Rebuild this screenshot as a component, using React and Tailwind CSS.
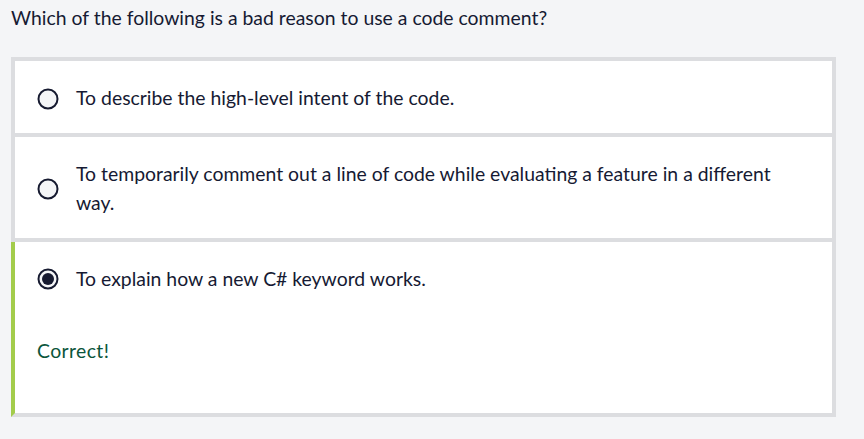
import React from "react";

function Radio({ checked }) {
  return (
    <svg width="22" height="22" viewBox="0 0 22 22" className="shrink-0">
      <circle cx="11" cy="11" r="9.5" fill="#f4f5f7" stroke="#161a30" strokeWidth="2" />
      {checked && <circle cx="11" cy="11" r="6" fill="#161a30" />}
    </svg>
  );
}

function Option({ text, checked, first, correct, children }) {
  return (
    <div
      className={
        "bg-white border-x-4 border-b-4 border-[#dcdde0] " +
        (first ? "border-t-4 " : "") +
        (correct ? "border-l-[#a3cc4b] " : "")
      }
    >
      <div className="flex items-center pl-[22px] pr-[22px] pt-[23.4px] pb-[19.8px]">
        <Radio checked={checked} />
        <div className="ml-[17px] text-[19.4px] leading-[28.8px] text-[#161a33]">{text}</div>
      </div>
      {children}
    </div>
  );
}

export default function App() {
  return (
    <div
      className="min-h-[439px] bg-[#f4f5f7] pl-[11px]"
      style={{ fontFamily: "Lato, 'Noto Sans', sans-serif" }}
    >
      <div className="pt-[4px] text-[19.4px] leading-[28.8px] text-[#161a33]">
        Which of the following is a bad reason to use a code comment?
      </div>
      <div className="mt-[24px] w-[825px]">
        <Option first text="To describe the high-level intent of the code." />
        <Option text="To temporarily comment out a line of code while evaluating a feature in a different way." />
        <Option correct checked text="To explain how a new C# keyword works.">
          <div className="pl-[22px] pt-[23px] pb-[48px] text-[19.4px] leading-[28.8px] tracking-[0.4px] text-[#0b553b]">
            Correct!
          </div>
        </Option>
      </div>
    </div>
  );
}
